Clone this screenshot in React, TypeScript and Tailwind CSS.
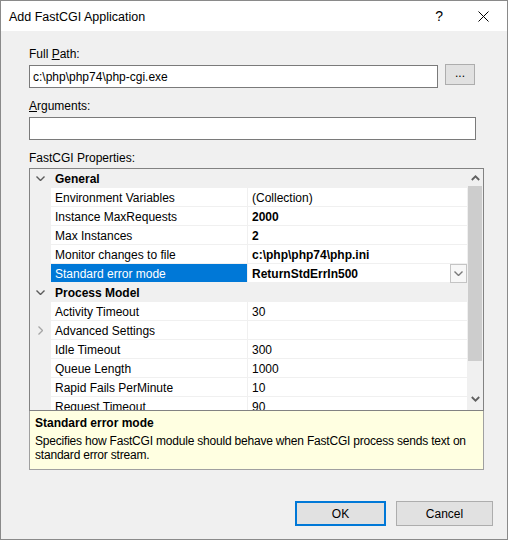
import React from 'react';

type PropRow = {
  name: string;
  value?: string;
  bold?: boolean;
  selected?: boolean;
  expander?: boolean;
  dropdown?: boolean;
};

const general: PropRow[] = [
  { name: 'Environment Variables', value: '(Collection)' },
  { name: 'Instance MaxRequests', value: '2000', bold: true },
  { name: 'Max Instances', value: '2', bold: true },
  { name: 'Monitor changes to file', value: 'c:\\php\\php74\\php.ini', bold: true },
  { name: 'Standard error mode', value: 'ReturnStdErrIn500', bold: true, selected: true, dropdown: true },
];

const processModel: PropRow[] = [
  { name: 'Activity Timeout', value: '30' },
  { name: 'Advanced Settings', value: '', expander: true },
  { name: 'Idle Timeout', value: '300' },
  { name: 'Queue Length', value: '1000' },
  { name: 'Rapid Fails PerMinute', value: '10' },
  { name: 'Request Timeout', value: '90' },
];

function ChevronDown({ className = '' }: { className?: string }) {
  return (
    <svg width="9" height="5" viewBox="0 0 9 5" className={className}>
      <path d="M0.5 0.5 L4.5 4.5 L8.5 0.5" fill="none" stroke="currentColor" strokeWidth="1.4" />
    </svg>
  );
}

function ChevronRight() {
  return (
    <svg width="5" height="9" viewBox="0 0 5 9">
      <path d="M0.5 0.5 L4.5 4.5 L0.5 8.5" fill="none" stroke="currentColor" strokeWidth="1.3" />
    </svg>
  );
}

function Category({ title }: { title: string }) {
  return (
    <div className="flex h-[19px] shrink-0 items-center bg-[#f0f0f0]">
      <div className="flex w-[21px] justify-center text-[#5c5c5c]">
        <ChevronDown />
      </div>
      <span className="pl-[4px] pt-[1px] font-bold">{title}</span>
    </div>
  );
}

function Row({ row }: { row: PropRow }) {
  return (
    <div className="flex h-[19px] shrink-0 border-b border-[#f0f0f0]">
      <div className="flex w-[21px] items-center justify-center bg-[#f0f0f0] text-[#a6a6a6]">
        {row.expander && <ChevronRight />}
      </div>
      <div
        className={`flex w-[196px] items-center pl-[4px] pt-[1px] ${row.selected ? 'bg-[#0078d7] text-white' : 'bg-white'}`}
      >
        {row.name}
      </div>
      <div className="w-px bg-[#f0f0f0]" />
      <div className={`flex flex-1 items-center bg-white pl-[4px] ${row.bold ? 'font-bold' : ''}`}>
        <span className="pt-[1px]">{row.value}</span>
        {row.dropdown && (
          <div className="ml-auto flex h-[19px] w-[17px] items-center justify-center border border-[#c4c4c4] bg-[#f7f7f7] text-[#7a7a7a]">
            <ChevronDown />
          </div>
        )}
      </div>
    </div>
  );
}

function ScrollArrow({ up }: { up?: boolean }) {
  return (
    <div className="flex h-[17px] items-center justify-center text-[#606060]">
      <svg width="9" height="6" viewBox="0 0 9 6">
        <path
          d={up ? 'M0.8 5 L4.5 1.3 L8.2 5' : 'M0.8 1 L4.5 4.7 L8.2 1'}
          fill="none"
          stroke="currentColor"
          strokeWidth="1.8"
        />
      </svg>
    </div>
  );
}

export default function App() {
  return (
    <div className="h-[540px] w-[508px] border border-[#8a8a8a] bg-[#f0f0f0] font-['Liberation_Sans',sans-serif] text-[12px] leading-[16px] text-black">
      <div className="flex h-[30px] items-center bg-white pl-[8px]">
        <span className="pt-[1px] text-[12.5px]">Add FastCGI Application</span>
        <span className="ml-auto mr-[35px] text-[14px]">?</span>
        <svg width="11" height="11" viewBox="0 0 11 11" className="mr-[18px]">
          <path d="M0.5 0.5 L10.5 10.5 M10.5 0.5 L0.5 10.5" stroke="#000" strokeWidth="1" />
        </svg>
      </div>

      <div className="flex flex-col pl-[28px] pr-[14px]">
        <label className="mt-[15px]">
          Full <span className="underline">P</span>ath:
        </label>
        <div className="mt-[3px] flex items-start">
          <div className="flex h-[23px] w-[409px] items-center border border-[#7a7a7a] bg-white pl-[3px] pt-[1px]">
            c:\php\php74\php-cgi.exe
          </div>
          <button className="-mt-[1px] ml-[7px] flex h-[21px] w-[30px] items-center justify-center border border-[#adadad] bg-[#e1e1e1] pb-[3px] text-[12px]">
            ...
          </button>
        </div>

        <label className="mt-[10px]">
          <span className="underline">A</span>rguments:
        </label>
        <div className="mt-[3px] h-[23px] w-[447px] border border-[#7a7a7a] bg-white" />

        <label className="mt-[10px]">FastCGI Properties:</label>
        <div className="mt-[2px] flex h-[243px] w-[455px] border border-[#828282] bg-[#f0f0f0]">
          <div className="flex flex-1 flex-col overflow-hidden">
            <Category title="General" />
            {general.map((row) => (
              <Row key={row.name} row={row} />
            ))}
            <Category title="Process Model" />
            {processModel.map((row) => (
              <Row key={row.name} row={row} />
            ))}
          </div>
          <div className="flex w-[16px] flex-col bg-[#f0f0f0]">
            <ScrollArrow up />
            <div className="mx-[1px] h-[175px] bg-[#cdcdcd]" />
            <div className="flex-1" />
            <ScrollArrow />
            <div className="h-[3px]" />
          </div>
        </div>

        <div className="h-[59px] w-[455px] border border-t-0 border-[#a0a0a0] bg-[#ffffe1] px-[5px] pt-[5px] leading-[14px]">
          <p className="font-bold">Standard error mode</p>
          <p className="mt-[4px] tracking-[-0.2px]">
            Specifies how FastCGI module should behave when FastCGI process sends text on standard error stream.
          </p>
        </div>

        <div className="mt-[31px] flex justify-end gap-[10px]">
          <button className="h-[25px] w-[91px] border-2 border-[#0078d7] bg-[#e1e1e1] pt-[1px] text-[12px]">OK</button>
          <button className="h-[25px] w-[97px] border border-[#adadad] bg-[#e1e1e1] pt-[1px] text-[12px]">Cancel</button>
        </div>
      </div>
    </div>
  );
}
